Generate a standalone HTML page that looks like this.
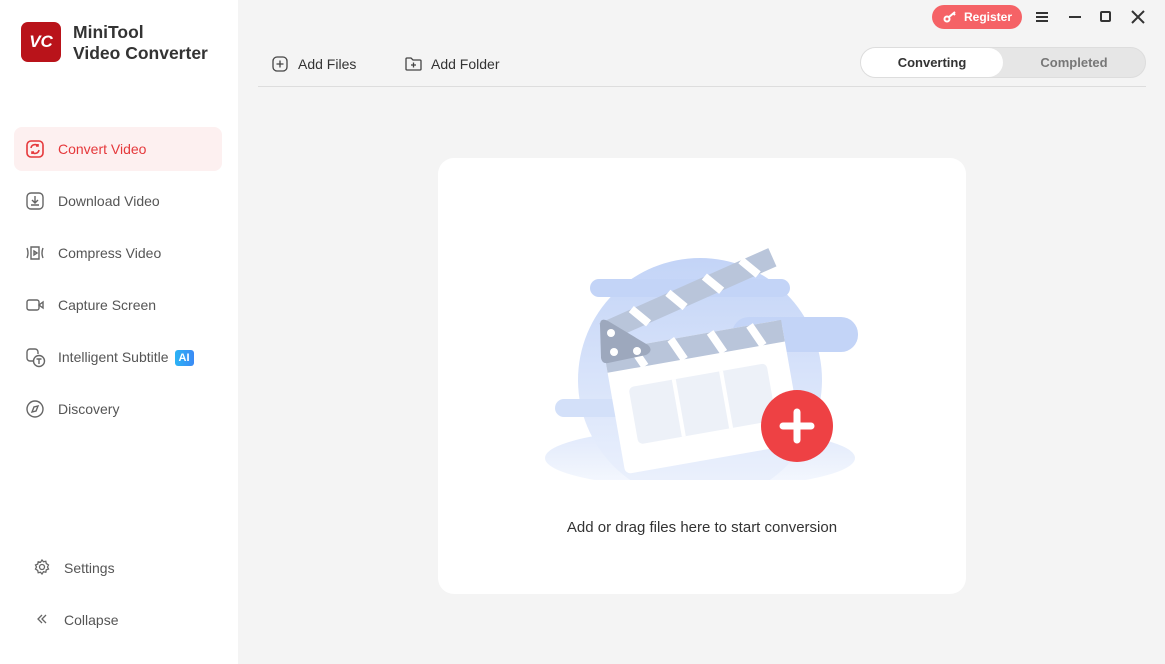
<!DOCTYPE html><html><head><style>
*{margin:0;padding:0;box-sizing:border-box}
body{width:1165px;height:664px;overflow:hidden;background:#f4f4f4;font-family:"Liberation Sans",sans-serif;position:relative;color:#333}
.side{position:absolute;left:0;top:0;width:238px;height:664px;background:#fff}
.logo{position:absolute;left:21px;top:22px;width:40px;height:40px;border-radius:7px;background:#b9131a;color:#fff;font-weight:bold;font-size:17px;text-align:center;line-height:40px;font-style:italic}
.title{position:absolute;left:73px;top:22px;font-size:17.5px;font-weight:bold;line-height:21px;color:#333}
.nav{position:absolute;left:14px;width:208px;height:44px;border-radius:8px;font-size:14px;color:#555;line-height:44px;padding-left:44px}
.nav svg{position:absolute;left:12px;top:13px}
.act{background:#fdf0f0;color:#e5383b}
.ai{display:inline-block;background:linear-gradient(90deg,#2bb3f5,#3b8af5);color:#fff;font-size:11px;font-weight:bold;border-radius:3px;padding:0 4px;line-height:16px;margin-left:6px;vertical-align:1px}
.top{position:absolute;font-size:14px;color:#333}
.card{position:absolute;left:438px;top:158px;width:528px;height:436px;background:#fff;border-radius:16px}
</style></head><body>
<div class="side">
<div class="logo">VC</div>
<div class="title">MiniTool<br>Video Converter</div>
<div class="nav act" style="top:127px"><svg width="18" height="18" viewBox="0 0 18 18" fill="none" stroke="#e5383b" stroke-width="1.6"><rect x="1" y="1" width="16" height="16" rx="4"/><path d="M5 8a4 4 0 0 1 7-2M13 10a4 4 0 0 1-7 2M12 4v2h-2M6 14v-2h2"/></svg>Convert Video</div>
<div class="nav" style="top:179px"><svg width="18" height="18" viewBox="0 0 18 18" fill="none" stroke="#666" stroke-width="1.4"><rect x="1" y="1" width="16" height="16" rx="4"/><path d="M9 4v7M6 8l3 3 3-3M5 13h8"/></svg>Download Video</div>
<div class="nav" style="top:231px"><svg width="18" height="18" viewBox="0 0 18 18" fill="none" stroke="#666" stroke-width="1.4"><path d="M1 4q2 5 0 10M17 4q-2 5 0 10M5 3h8v12H5zM8 7l3 2-3 2z"/></svg>Compress Video</div>
<div class="nav" style="top:283px"><svg width="18" height="18" viewBox="0 0 18 18" fill="none" stroke="#666" stroke-width="1.4"><rect x="1" y="4" width="12" height="10" rx="2"/><path d="M13 9l4-3v6z"/></svg>Capture Screen</div>
<div class="nav" style="top:335px"><svg width="20" height="20" viewBox="0 0 20 20" fill="none" stroke="#666" stroke-width="1.4"><path d="M8 13H4a3 3 0 0 1-3-3V4a3 3 0 0 1 3-3h5a3 3 0 0 1 3 3v2"/><circle cx="13" cy="13" r="5.5"/><path d="M10.5 11h5M13 11v5"/></svg>Intelligent Subtitle<span class="ai">AI</span></div>
<div class="nav" style="top:387px"><svg width="18" height="18" viewBox="0 0 18 18" fill="none" stroke="#666" stroke-width="1.4"><circle cx="9" cy="9" r="8"/><path d="M12 6l-2 5-4 1 2-5z"/></svg>Discovery</div>
<div class="nav" style="top:546px;padding-left:50px"><svg style="left:20px" width="16" height="16" viewBox="0 0 16 16" fill="none" stroke="#666" stroke-width="1.3"><circle cx="8" cy="8" r="2.5"/><path d="M8 1l1.5 1.8 2.3-.5.5 2.3L14.5 6l-1 2 1 2-2.2.9-.5 2.3-2.3-.5L8 15l-1.5-1.8-2.3.5-.5-2.3L1.5 10l1-2-1-2 2.2-.9.5-2.3 2.3.5z"/></svg>Settings</div>
<div class="nav" style="top:598px;padding-left:50px"><svg style="left:20px" width="16" height="16" viewBox="0 0 16 16" fill="none" stroke="#666" stroke-width="1.3"><path d="M8 4L4 8l4 4M12 4L8 8l4 4"/></svg>Collapse</div>
</div>
<div style="position:absolute;left:932px;top:5px;width:90px;height:24px;border-radius:12px;background:#f56266;color:#fff;font-size:12px;font-weight:bold;line-height:24px;padding-left:32px">Register<svg style="position:absolute;left:11px;top:6px" width="14" height="12" viewBox="0 0 14 12" fill="none" stroke="#fff" stroke-width="2"><circle cx="4" cy="8" r="2.5"/><path d="M6 6l6-5M10 2l2 2"/></svg></div>
<div style="position:absolute;left:1036px;top:12px;width:12px;height:10px;border-top:2px solid #333;border-bottom:2px solid #333"><div style="margin-top:2px;height:2px;background:#333"></div></div>
<div style="position:absolute;left:1069px;top:16px;width:12px;height:2px;background:#333"></div>
<div style="position:absolute;left:1100px;top:11px;width:11px;height:11px;border:2px solid #333;border-radius:2px"></div>
<svg style="position:absolute;left:1131px;top:10px" width="14" height="14" viewBox="0 0 14 14" stroke="#333" stroke-width="2"><path d="M1 1l12 12M13 1L1 13"/></svg>
<div class="top" style="left:272px;top:56px;padding-left:26px"><svg style="position:absolute;left:0;top:0" width="16" height="16" viewBox="0 0 16 16" fill="none" stroke="#444" stroke-width="1.3"><rect x="1" y="1" width="14" height="14" rx="4"/><path d="M8 4.5v7M4.5 8h7"/></svg>Add Files</div>
<div class="top" style="left:405px;top:56px;padding-left:26px"><svg style="position:absolute;left:0;top:0" width="17" height="16" viewBox="0 0 17 16" fill="none" stroke="#444" stroke-width="1.3"><path d="M1 3a1 1 0 0 1 1-1h4l2 2h7a1 1 0 0 1 1 1v8a1 1 0 0 1-1 1H2a1 1 0 0 1-1-1z"/><path d="M8.5 6.5v5M6 9h5"/></svg>Add Folder</div>
<div style="position:absolute;left:860px;top:47px;width:286px;height:31px;border-radius:16px;background:#e6e6e6;border:1px solid #ddd"></div>
<div style="position:absolute;left:861px;top:48px;width:142px;height:29px;border-radius:15px;background:#fff;text-align:center;line-height:29px;font-size:13px;font-weight:bold;color:#333">Converting</div>
<div style="position:absolute;left:1003px;top:48px;width:142px;height:29px;text-align:center;line-height:29px;font-size:13px;font-weight:bold;color:#777">Completed</div>
<div style="position:absolute;left:258px;top:86px;width:888px;height:1px;background:#ddd"></div>
<div class="card">
<svg style="position:absolute;left:92px;top:82px" width="340" height="240" viewBox="530 240 340 240">
<defs><linearGradient id="g" x1="0" y1="0" x2="0" y2="1"><stop offset="0" stop-color="#c3d4f7"/><stop offset="1" stop-color="#eef3fd"/></linearGradient><linearGradient id="e" x1="0" y1="0" x2="0" y2="1"><stop offset="0" stop-color="#dfe8fb"/><stop offset="1" stop-color="#f6f9fe"/></linearGradient></defs>
<ellipse cx="700" cy="458" rx="155" ry="30" fill="url(#e)"/>
<circle cx="700" cy="380" r="122" fill="url(#g)"/>
<rect x="590" y="279" width="200" height="18" rx="9" fill="#c3d4f7"/>
<rect x="732" y="317" width="126" height="35" rx="17" fill="#c3d4f7"/>
<rect x="555" y="399" width="90" height="18" rx="9" fill="#d3e0f9"/>
<g transform="rotate(-10 700 390)"><rect x="612" y="335" width="180" height="125" rx="6" fill="#fff"/><rect x="612" y="335" width="180" height="22" fill="#b9c5da"/><rect x="630" y="375" width="140" height="58" rx="5" fill="#edf1f8"/><path d="M676 375v58M724 375v58" stroke="#fff" stroke-width="4"/><path d="M640 335l10 22M680 335l10 22M720 335l10 22M760 335l10 22" stroke="#fff" stroke-width="8"/></g>
<g transform="rotate(-24 610 335)"><rect x="605" y="320" width="185" height="20" fill="#b9c5da"/><path d="M640 320l10 20M680 320l10 20M720 320l10 20M760 320l10 20" stroke="#fff" stroke-width="8"/></g>
<path d="M600 325q0-8 8-4l40 24q6 6-2 10l-38 8q-6 1-7-5z" fill="#9da8bd"/>
<circle cx="611" cy="333" r="4" fill="#fff"/><circle cx="614" cy="352" r="4" fill="#fff"/><circle cx="637" cy="351" r="4" fill="#fff"/>
<circle cx="797" cy="426" r="36" fill="#ee4144"/><path d="M797 412v28M783 426h28" stroke="#fff" stroke-width="7" stroke-linecap="round"/>
</svg>
<div style="position:absolute;left:0;top:361px;width:100%;text-align:center;font-size:15px;color:#333">Add or drag files here to start conversion</div>
</div>
</body></html>
